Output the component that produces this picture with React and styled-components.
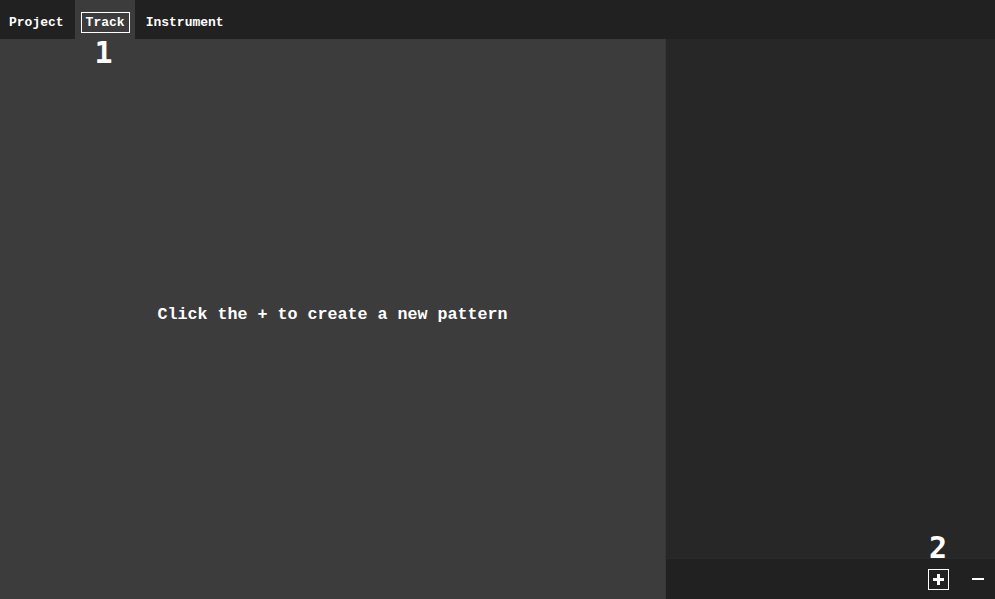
import styled, { createGlobalStyle } from "styled-components";

const GlobalStyle = createGlobalStyle`
    html, body {
        margin: 0;
        padding: 0;
        background: #3c3c3c;
    }
    body {
        font-family: "Liberation Mono", "DejaVu Sans Mono", monospace;
        color: #ffffff;
    }
`;

function App() {
    const tabs = ["Project", "Track", "Instrument"];
    const active = "Track";

    return (
        <>
            <GlobalStyle />
            <Page>
                <MenuBar>
                    {tabs.map((tab) => (
                        <Tab key={tab} active={tab === active}>
                            <TabLabel active={tab === active}>{tab}</TabLabel>
                            {tab === active && <Marker className="one">1</Marker>}
                        </Tab>
                    ))}
                </MenuBar>
                <Body>
                    <Editor>
                        <Hint>Click the + to create a new pattern</Hint>
                    </Editor>
                    <Side>
                        <PatternList />
                        <Controls>
                            <IconButton>
                                <svg width="21" height="21" viewBox="0 0 21 21">
                                    <rect x="0.5" y="0.5" width="20" height="20" fill="none" stroke="#fff" />
                                    <rect x="5" y="9" width="11" height="3" fill="#fff" />
                                    <rect x="9" y="5" width="3" height="11" fill="#fff" />
                                </svg>
                                <Marker className="two">2</Marker>
                            </IconButton>
                            <IconButton>
                                <svg width="21" height="21" viewBox="0 0 21 21">
                                    <rect x="4" y="9" width="12" height="2" fill="#fff" />
                                </svg>
                            </IconButton>
                        </Controls>
                    </Side>
                </Body>
            </Page>
        </>
    );
}

export default App;

const Page = styled.div`
    display: flex;
    flex-direction: column;
    width: 995px;
    height: 599px;
    overflow: hidden;
`;

const MenuBar = styled.div`
    display: flex;
    align-items: stretch;
    height: 39px;
    background: #212121;
    font-size: 13px;
    font-weight: bold;
`;

const Tab = styled.div`
    position: relative;
    display: flex;
    align-items: center;
    padding: 5px 5px 0 6px;
    background: ${(props) => (props.active ? "#3c3c3c" : "transparent")};

    &:first-child {
        padding-left: 4px;
        padding-right: 6px;
    }
`;

const TabLabel = styled.span`
    padding: 2px 4px;
    line-height: 15px;
    border: 1px solid ${(props) => (props.active ? "#ffffff" : "transparent")};
`;

const Marker = styled.div`
    position: absolute;
    font-family: "DejaVu Sans Mono", monospace;
    font-size: 30px;
    font-weight: bold;
    line-height: 30px;
    color: #ffffff;

    &.one {
        top: 38px;
        left: 20px;
    }

    &.two {
        bottom: 27px;
        left: 1px;
    }
`;

const Body = styled.div`
    display: flex;
    flex: 1;
`;

const Editor = styled.div`
    display: flex;
    align-items: center;
    justify-content: center;
    width: 666px;
    padding-bottom: 10px;
    box-sizing: border-box;
    background: #3c3c3c;
    border-right: 1px solid #363636;
`;

const Hint = styled.div`
    font-size: 16.67px;
    font-weight: bold;
`;

const Side = styled.div`
    display: flex;
    flex-direction: column;
    flex: 1;
    background: #272727;
`;

const PatternList = styled.div`
    flex: 1;
`;

const Controls = styled.div`
    display: flex;
    align-items: center;
    justify-content: flex-end;
    gap: 19px;
    height: 40px;
    padding-right: 6px;
    background: #212121;
    border-top: 1px solid #2a2a2a;
`;

const IconButton = styled.button`
    all: unset;
    position: relative;
    display: flex;
    width: 21px;
    height: 21px;
`;
